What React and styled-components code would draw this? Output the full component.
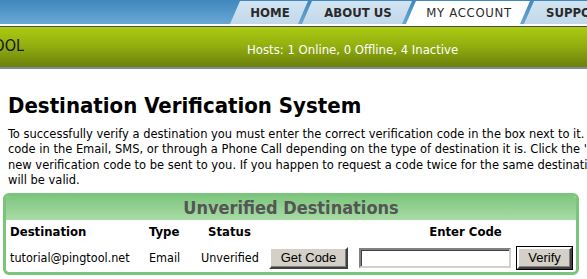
import React from "react";
import styled, { createGlobalStyle } from "styled-components";

const GlobalStyle = createGlobalStyle`
  html, body {
    margin: 0;
    padding: 0;
    background: #ffffff;
    overflow: hidden;
  }
  body {
    font-family: "DejaVu Sans", Tahoma, sans-serif;
    font-stretch: condensed;
    font-size: 13px;
    color: #000;
  }
`;

const Page = styled.div`
  width: 780px;
`;

const NavBar = styled.div`
  height: 24px;
  display: flex;
  align-items: flex-end;
  padding-left: 230px;
  background: linear-gradient(#3f87bd, #6aa8d4);
  border-bottom: 2px solid #ffffff;
`;

const Tab = styled.a`
  flex: none;
  width: ${(p) => p.$width}px;
  height: 23px;
  margin-left: ${(p) => (p.$first ? 0 : -6)}px;
  display: flex;
  align-items: center;
  justify-content: ${(p) => (p.$start ? "flex-start" : "center")};
  padding-left: ${(p) => (p.$start ? 22 : 2)}px;
  box-sizing: border-box;
  clip-path: polygon(10px 0, 100% 0, calc(100% - 10px) 100%, 0 100%);
  background: ${(p) =>
    p.$active ? "#ffffff" : "linear-gradient(#d2e4f1, #c2d8ea)"};
  color: #2a2a2a;
  font-weight: ${(p) => (p.$active ? "normal" : "bold")};
  letter-spacing: ${(p) => (p.$active ? "0.7px" : "0")};
  font-size: 13px;
  text-decoration: none;
  white-space: nowrap;
`;

const StatusBar = styled.div`
  height: 40px;
  display: flex;
  align-items: center;
  border-top: 1px solid #4d4d4d;
  border-bottom: 2px solid #7d8a99;
  background: linear-gradient(#aacb12 0%, #93b00f 45%, #6c800c 100%);
`;

const Logo = styled.div`
  width: 24px;
  flex: none;
  display: flex;
  justify-content: flex-end;
  overflow: hidden;
  font-size: 16px;
  color: #151515;
  margin-top: -4px;
  white-space: nowrap;
`;

const Hosts = styled.div`
  margin-left: 223px;
  margin-top: 4px;
  color: #ffffff;
  font-size: 13px;
  white-space: nowrap;
`;

const Main = styled.div`
  padding: 0 8px;
`;

const Title = styled.h1`
  margin: 23px 0 6px;
  font-size: 22px;
  line-height: 28px;
  font-weight: bold;
  white-space: nowrap;
`;

const Intro = styled.p`
  margin: 0 0 5px;
  font-size: 12.75px;
  line-height: 15.4px;
  white-space: nowrap;
`;

const Panel = styled.div`
  width: 570px;
  margin-left: -5px;
  border: 3px solid #7bc47b;
  border-radius: 6px;
  background: #ffffff;
  overflow: hidden;
`;

const PanelHeader = styled.div`
  height: 24px;
  margin-top: -3px;
  padding-top: 3px;
  display: flex;
  align-items: center;
  justify-content: center;
  background: linear-gradient(#79c479, #a8dca6);
  color: #555555;
  font-size: 18px;
  font-weight: bold;
`;

const Table = styled.table`
  width: 570px;
  table-layout: fixed;
  border-collapse: collapse;
`;

const HeadCell = styled.th`
  height: 24px;
  padding: 0 4px;
  text-align: ${(p) => p.$align || "left"};
  font-size: 13px;
  font-weight: bold;
`;

const Cell = styled.td`
  height: 28px;
  padding: 0 4px;
  text-align: ${(p) => p.$align || "left"};
  font-size: 12.5px;
  white-space: nowrap;
`;

const Button = styled.button`
  height: 22px;
  width: ${(p) => p.$width}px;
  padding: 0;
  font-family: "Liberation Sans", Arial, sans-serif;
  font-stretch: normal;
  font-size: 13px;
  color: #000;
  background: #d4d0c8;
  border: 2px solid;
  border-color: #ffffff #404040 #404040 #ffffff;
  box-shadow: inset -1px -1px 0 #808080;
  outline: ${(p) => (p.$default ? "1px solid #000" : "none")};
  vertical-align: middle;
`;

const CodeInput = styled.input`
  width: 152px;
  height: 20px;
  box-sizing: border-box;
  border: 2px solid;
  border-color: #808080 #d4d0c8 #d4d0c8 #808080;
  box-shadow: inset 1px 1px 0 #404040;
  background: #fff;
  vertical-align: middle;
`;

const columns = [139, 52, 65, 93, 158, 63];

export default function App() {
  return (
    <Page>
      <GlobalStyle />
      <NavBar>
        <Tab $first $width={78}>HOME</Tab>
        <Tab $width={110}>ABOUT US</Tab>
        <Tab $width={124} $active>MY ACCOUNT</Tab>
        <Tab $width={120} $start>SUPPORT</Tab>
      </NavBar>
      <StatusBar>
        <Logo>PINGTOOL</Logo>
        <Hosts>Hosts: 1 Online, 0 Offline, 4 Inactive</Hosts>
      </StatusBar>
      <Main>
        <Title>Destination Verification System</Title>
        <Intro>
          To successfully verify a destination you must enter the correct verification code in the box next to it. You will receive this
          <br />
          code in the Email, SMS, or through a Phone Call depending on the type of destination it is. Click the 'Get Code' button for a
          <br />
          new verification code to be sent to you. If you happen to request a code twice for the same destination, only the last code
          <br />
          will be valid.
        </Intro>
        <Panel>
          <PanelHeader>Unverified Destinations</PanelHeader>
          <Table>
            <colgroup>
              {columns.map((w, i) => (
                <col key={i} style={{ width: w }} />
              ))}
            </colgroup>
            <thead>
              <tr>
                <HeadCell>Destination</HeadCell>
                <HeadCell>Type</HeadCell>
                <HeadCell $align="center">Status</HeadCell>
                <HeadCell />
                <HeadCell colSpan={2} $align="center">Enter Code</HeadCell>
              </tr>
            </thead>
            <tbody>
              <tr>
                <Cell>tutorial@pingtool.net</Cell>
                <Cell>Email</Cell>
                <Cell $align="center">Unverified</Cell>
                <Cell $align="center">
                  <Button $width={79}>Get Code</Button>
                </Cell>
                <Cell $align="center">
                  <CodeInput type="text" />
                </Cell>
                <Cell $align="center">
                  <Button $width={55} $default>Verify</Button>
                </Cell>
              </tr>
            </tbody>
          </Table>
        </Panel>
      </Main>
    </Page>
  );
}
